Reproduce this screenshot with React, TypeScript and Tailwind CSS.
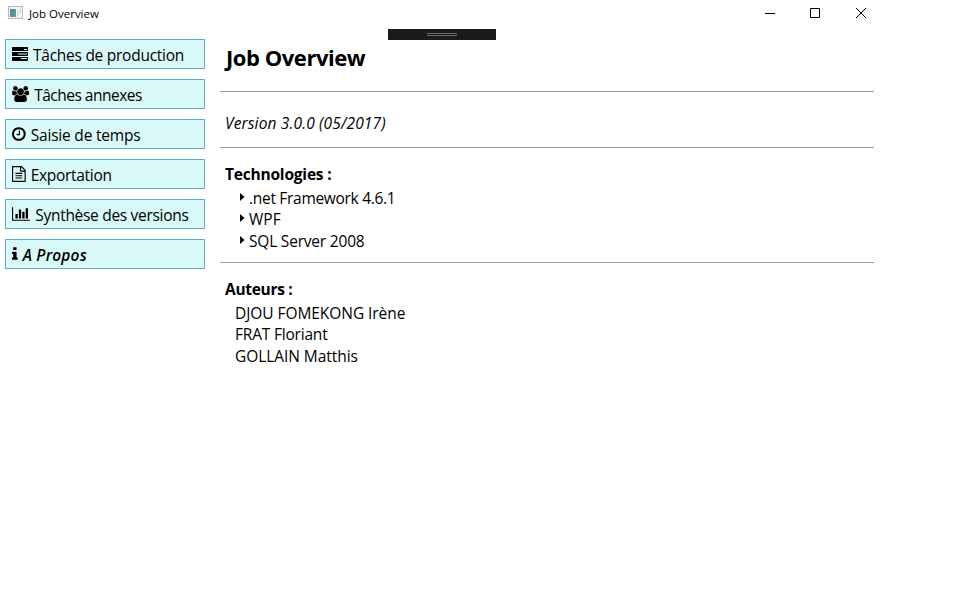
import type { ReactNode } from "react";

type Glyph = { viewBox: string; width: number; d: string };

const glyphs: Record<string, Glyph> = {
  tasks: {
    viewBox: "0 0 16 16",
    width: 16,
    d: "M0.5 1h15l.5 .5v3l-.5 .5h-15l-.5-.5v-3zM12 3v1h3v-1zM0.5 6h15l.5 .5v3l-.5 .5h-15l-.5-.5v-3zM6 7.5v1h9v-1zM0.5 11h15l.5 .5v3l-.5 .5h-15l-.5-.5v-3zM9 12v1h6v-1z",
  },
  users: {
    viewBox: "0 0 1920 1792",
    width: 17.14,
    d: "M593 896q-162 5-265 128h-134q-82 0-138-40.5t-56-118.5q0-353 124-353 6 0 43.5 21t97.5 42.5 119 21.5q67 0 133-23-5 37-5 66 0 139 81 256zm1071 637q0 120-73 189.5t-194 69.5h-874q-121 0-194-69.5t-73-189.5q0-53 3.5-103.5t14-109 26.5-108.5 43-97.5 62-81 85.5-53.5 111.5-20q10 0 43 21.5t73 48 107 48 135 21.5 135-21.5 107-48 73-48 43-21.5q61 0 111.5 20t85.5 53.5 62 81 43 97.5 26.5 108.5 14 109 3.5 103.5zm-1024-1277q0 106-75 181t-181 75-181-75-75-181 75-181 181-75 181 75 75 181zm704 384q0 159-112.5 271.5t-271.5 112.5-271.5-112.5-112.5-271.5 112.5-271.5 271.5-112.5 271.5 112.5 112.5 271.5zm576 225q0 78-56 118.5t-138 40.5h-134q-103-123-265-128 81-117 81-256 0-29-5-66 66 23 133 23 59 0 119-21.5t97.5-42.5 43.5-21q124 0 124 353zm-128-609q0 106-75 181t-181 75-181-75-75-181 75-181 181-75 181 75 75 181z",
  },
  clock: {
    viewBox: "128 0 1536 1792",
    width: 13.71,
    d: "M1024 544v448q0 14-9 23t-23 9h-320q-14 0-23-9t-9-23v-64q0-14 9-23t23-9h224v-352q0-14 9-23t23-9h64q14 0 23 9t9 23zm416 352q0-148-73-273t-198-198-273-73-273 73-198 198-73 273 73 273 198 198 273 73 273-73 198-198 73-273zm224 0q0 209-103 385.5t-279.5 279.5-385.5 103-385.5-103-279.5-279.5-103-385.5 103-385.5 279.5-279.5 385.5-103 385.5 103 279.5 279.5 103 385.5z",
  },
  file: {
    viewBox: "128 0 1536 1792",
    width: 13.71,
    d: "M1596 380q28 28 48 76t20 88v1152q0 40-28 68t-68 28h-1344q-40 0-68-28t-28-68v-1600q0-40 28-68t68-28h896q40 0 88 20t76 48zm-444-244v376h376q-10-29-22-41l-313-313q-12-12-41-22zm384 1528v-1024h-416q-40 0-68-28t-28-68v-416h-768v1536h1280zm-1024-864q0-14 9-23t23-9h704q14 0 23 9t9 23v64q0 14-9 23t-23 9h-704q-14 0-23-9t-9-23v-64zm736 224q14 0 23 9t9 23v64q0 14-9 23t-23 9h-704q-14 0-23-9t-9-23v-64q0-14 9-23t23-9h704zm0 256q14 0 23 9t9 23v64q0 14-9 23t-23 9h-704q-14 0-23-9t-9-23v-64q0-14 9-23t23-9h704z",
  },
  chart: {
    viewBox: "0 0 2048 1792",
    width: 18.29,
    d: "M640 896v512h-256v-512h256zm384-512v1024h-256v-1024h256zm1024 1152v128h-2048v-1536h128v1408h1920zm-640-896v768h-256v-768h256zm384-384v1152h-256v-1152h256z",
  },
  info: {
    viewBox: "576 0 640 1792",
    width: 5.71,
    d: "M1216 1344v128q0 26-19 45t-45 19h-512q-26 0-45-19t-19-45v-128q0-26 19-45t45-19h64v-384h-64q-26 0-45-19t-19-45v-128q0-26 19-45t45-19h384q26 0 45 19t19 45v576h64q26 0 45 19t19 45zm-128-1152v192q0 26-19 45t-45 19h-256q-26 0-45-19t-19-45v-192q0-26 19-45t45-19h256q26 0 45 19t19 45z",
  },
};

const menu = [
  { icon: "tasks", label: "Tâches de production", style: "ml-[5px] tracking-[-0.26px]" },
  { icon: "users", label: "Tâches annexes", style: "ml-[5px] tracking-[-0.5px]" },
  { icon: "clock", label: "Saisie de temps", style: "ml-[5px] tracking-[-0.2px]" },
  { icon: "file", label: "Exportation", style: "ml-[5px] tracking-[-0.3px]" },
  { icon: "chart", label: "Synthèse des versions", style: "ml-[5px] tracking-[-0.3px]" },
  { icon: "info", label: "A Propos", style: "ml-[5px] tracking-[0.2px] font-semibold italic" },
];

function MenuButton({ icon, label, style }: { icon: string; label: string; style: string }) {
  const g = glyphs[icon];
  return (
    <button className="flex h-[30px] w-[200px] items-center border border-[#62abcb] bg-[#d9f8f8] pl-[6px] text-left">
      <svg viewBox={g.viewBox} width={g.width} height={16} className="shrink-0">
        <path d={g.d} fill="#000" fillRule={icon === "tasks" ? "evenodd" : "nonzero"} />
      </svg>
      <span className={`pt-[2px] whitespace-nowrap leading-[22px] ${style}`}>{label}</span>
    </button>
  );
}

function Tech({ children, style }: { children: ReactNode; style: string }) {
  return (
    <li className="flex items-start leading-[22px]">
      <svg width="5" height="8" viewBox="0 0 5 8" className="mt-[6px] mr-[4px]">
        <path d="M0 0L4.5 4L0 8z" fill="#000" />
      </svg>
      <span className={style}>{children}</span>
    </li>
  );
}

export default function App() {
  return (
    <div className="h-[590px] w-[960px] overflow-hidden bg-white font-['Open_Sans','Noto_Sans',sans-serif] text-[15.5px] text-black">
      <header className="flex h-[29px] w-[884px] items-start">
        <svg width="15" height="13" viewBox="0 0 15 13" className="mt-[6px] ml-[8px]">
          <defs>
            <linearGradient id="pane" x1="0" y1="0" x2="1" y2="1">
              <stop offset="0" stopColor="#4a86a0" />
              <stop offset="1" stopColor="#62a583" />
            </linearGradient>
          </defs>
          <rect x="0.5" y="0.5" width="14" height="12" fill="#f4f4f4" stroke="#b5b9bc" />
          <rect x="2" y="3" width="6" height="8" fill="url(#pane)" />
          <rect x="9" y="3" width="2" height="8" fill="#dce5e8" />
          <rect x="12" y="3" width="1" height="4" fill="#b7cfc4" />
        </svg>
        <span className="mt-[5px] ml-[6px] text-[11.5px] leading-[18px] tracking-[0px]">Job Overview</span>
        <svg width="103" height="12" viewBox="0 0 103 12" className="mt-[8px] mr-[17px] ml-auto" fill="none" stroke="#000">
          <path d="M1 5.5H11M46.5 0.5H55.5V9.5H46.5zM92 0L102 10M102 0L92 10" />
        </svg>
      </header>
      <div className="flex">
        <nav className="flex flex-col gap-[10px] pt-[10px] pl-[5px]">
          {menu.map((m) => (
            <MenuButton key={m.icon} {...m} />
          ))}
        </nav>
        <main className="ml-[15px] w-[654px]">
          <section className="relative h-[63px] border-b border-[#a0a0a0] pl-[5px]">
            <div className="absolute top-0 left-[168px] flex h-[11px] w-[108px] flex-col items-center gap-px bg-[#1b1b1c] pt-[4px]">
              <div className="h-px w-[30px] bg-[#6b6b6b]" />
              <div className="h-px w-[30px] bg-[#6b6b6b]" />
            </div>
            <h1 className="pt-[13px] pl-px text-[22px] leading-[30px] font-bold tracking-[-0.45px]">Job Overview</h1>
          </section>
          <section className="h-[56px] border-b border-[#a0a0a0] pt-[20px] pl-[5px]">
            <p className="leading-[22px] tracking-[0.14px] italic">Version 3.0.0 (05/2017)</p>
          </section>
          <section className="h-[115px] border-b border-[#a0a0a0] pt-[15px] pl-[5px]">
            <h2 className="h-[24px] leading-[22px] font-bold tracking-[-0.2px]">Technologies :</h2>
            <ul className="grid grid-rows-[21px_22px_22px] pl-[15px]">
              <Tech style="tracking-[-0.3px]">.net Framework 4.6.1</Tech>
              <Tech style="tracking-[0px]">WPF</Tech>
              <Tech style="tracking-[-0.2px]">SQL Server 2008</Tech>
            </ul>
          </section>
          <section className="pt-[15px] pl-[5px]">
            <h2 className="h-[24px] leading-[22px] font-bold tracking-[-0.3px]">Auteurs :</h2>
            <ul className="grid grid-rows-[21px_22px_22px] pl-[10px] leading-[22px]">
              <li><span className="tracking-[-0.06px]">DJOU FOMEKONG Irène</span></li>
              <li><span className="tracking-[-0.2px]">FRAT Floriant</span></li>
              <li><span className="tracking-[-0.06px]">GOLLAIN Matthis</span></li>
            </ul>
          </section>
        </main>
      </div>
    </div>
  );
}
